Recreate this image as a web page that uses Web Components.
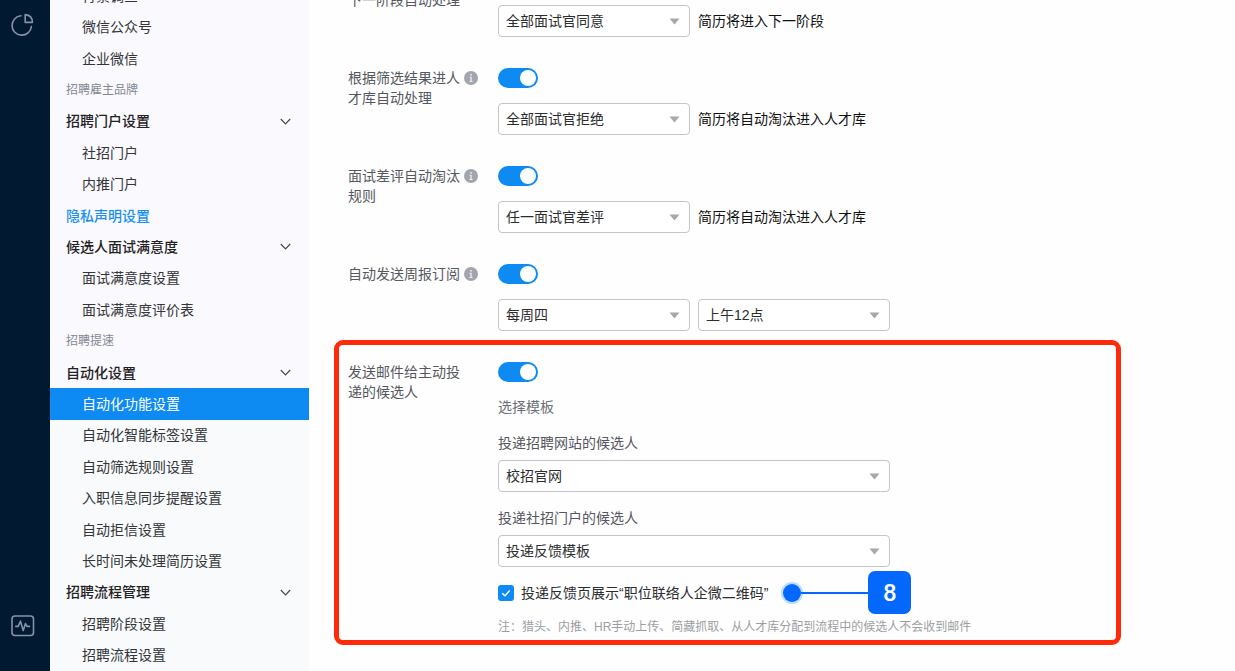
<!DOCTYPE html>
<html lang="zh-CN">
<head>
<meta charset="utf-8">
<meta name="viewport" content="width=device-width, initial-scale=1">
<title>自动化功能设置</title>
<style>
  html, body { margin: 0; }
  body {
    font-family: "Liberation Sans", "Noto Sans CJK SC", sans-serif;
    font-size: 14px;
    line-height: 20px;
    color: #2b2d31;
    background: #fefefe;
    overflow: hidden;
  }
</style>
</head>
<body>
<app-shell>
  <side-rail slot="rail"></side-rail>
  <side-nav slot="nav">
    <nav-item>背景调查</nav-item>
    <nav-item>微信公众号</nav-item>
    <nav-item>企业微信</nav-item>
    <nav-caption>招聘雇主品牌</nav-caption>
    <nav-group>招聘门户设置</nav-group>
    <nav-item>社招门户</nav-item>
    <nav-item>内推门户</nav-item>
    <nav-item top>隐私声明设置</nav-item>
    <nav-group>候选人面试满意度</nav-group>
    <nav-item>面试满意度设置</nav-item>
    <nav-item>面试满意度评价表</nav-item>
    <nav-caption>招聘提速</nav-caption>
    <nav-group>自动化设置</nav-group>
    <nav-item active>自动化功能设置</nav-item>
    <nav-item>自动化智能标签设置</nav-item>
    <nav-item>自动筛选规则设置</nav-item>
    <nav-item>入职信息同步提醒设置</nav-item>
    <nav-item>自动拒信设置</nav-item>
    <nav-item>长时间未处理简历设置</nav-item>
    <nav-group>招聘流程管理</nav-group>
    <nav-item>招聘阶段设置</nav-item>
    <nav-item>招聘流程设置</nav-item>
  </side-nav>

  <setting-row info>
    <span slot="label">根据筛选结果进入下一阶段自动处理</span>
    <control-line>
      <select-box value="全部面试官同意"></select-box>
      <span>简历将进入下一阶段</span>
    </control-line>
  </setting-row>
  <setting-row info>
    <span slot="label">根据筛选结果进人才库自动处理</span>
    <control-line>
      <select-box value="全部面试官拒绝"></select-box>
      <span>简历将自动淘汰进入人才库</span>
    </control-line>
  </setting-row>
  <setting-row info>
    <span slot="label">面试差评自动淘汰规则</span>
    <control-line>
      <select-box value="任一面试官差评"></select-box>
      <span>简历将自动淘汰进入人才库</span>
    </control-line>
  </setting-row>
  <setting-row info>
    <span slot="label">自动发送周报订阅</span>
    <control-line>
      <select-box value="每周四"></select-box>
      <select-box value="上午12点"></select-box>
    </control-line>
  </setting-row>
  <highlight-frame>
    <setting-row>
      <span slot="label">发送邮件给主动投递的候选人</span>
      <template-form></template-form>
    </setting-row>
  </highlight-frame>
</app-shell>

<script>
  const define = (name, html, setup) => {
    const template = document.createElement('template');
    template.innerHTML = html;
    customElements.define(name, class extends HTMLElement {
      constructor() {
        super();
        this.attachShadow({ mode: 'open' }).append(template.content.cloneNode(true));
      }
      connectedCallback() {
        if (setup) setup(this, this.shadowRoot);
      }
    });
  };

  define('app-shell', `
    <style>
      :host { display: flex; min-height: 100vh; }
      slot[name=rail], slot[name=nav] { display: contents; }
      main { flex: 1; min-width: 0; margin-top: -30px; padding-left: 39px; display: flow-root; color: #111; }
    </style>
    <slot name="rail"></slot>
    <slot name="nav"></slot>
    <main><slot></slot></main>`);

  define('side-rail', `
    <style>
      :host {
        flex: none; width: 50px; box-sizing: border-box; padding: 12px 10px 34px;
        display: flex; flex-direction: column; justify-content: space-between;
        background: #021a31;
      }
      button { all: unset; display: block; height: 24px; }
      svg { display: block; fill: none; stroke: #8593a8; stroke-width: 1.6; stroke-linejoin: round; stroke-linecap: round; }
    </style>
    <button aria-label="报表"><svg width="26" height="26" viewBox="0 0 26 26">
      <path d="M11 3.8A9.7 9.7 0 1 0 21.4 14.5"/>
      <path d="M15.2 2.6V10.4H22.4C22.4 5.8 19.6 3 15.2 2.6Z"/>
    </svg></button>
    <button aria-label="动态"><svg width="26" height="26" viewBox="0 0 26 26">
      <rect x="2" y="3" width="21.5" height="19.5" rx="3"/>
      <path d="M5.8 13.4H8.2L10.5 8.2L13.2 17.6L15.5 10.6L17 13.4H19.5"/>
    </svg></button>`);

  define('side-nav', `
    <style>
      :host {
        flex: none; width: 259px; display: flex; flex-direction: column;
        background: linear-gradient(#faf9fd 0, #faf9fd 388px, #f8fafb 420px);
      }
      nav { flex: 1; margin-top: -20px; display: flex; flex-direction: column; }
      ::slotted(*) { flex: 1 0 31px; }
    </style>
    <nav><slot></slot></nav>`);

  define('nav-item', `
    <style>
      :host { display: flex; color: #333539; }
      a { flex: 1; display: flex; align-items: center; padding-left: 32px; color: inherit; text-decoration: none; }
      :host([active]) { background: #0d8bf2; color: #fff; }
      :host([top]) { color: #1a91ee; font-weight: 500; }
      :host([top]) a { padding-left: 16px; }
    </style>
    <a href="#"><slot></slot></a>`);

  define('nav-caption', `
    <style>
      :host { display: flex; align-items: center; padding-left: 16px; font-size: 12px; color: #858892; }
    </style>
    <slot></slot>`);

  define('nav-group', `
    <style>
      :host { display: flex; }
      button {
        flex: 1; border: 0; margin: 0; padding: 0 18px 0 16px; background: none;
        display: flex; align-items: center; justify-content: space-between;
        font: inherit; font-weight: 500; color: #1f2125;
      }
      svg { fill: none; stroke: #44474d; stroke-width: 1.2; }
    </style>
    <button aria-expanded="true"><slot></slot>
      <svg width="11" height="7" viewBox="0 0 11 7"><path d="M0.8 1L5.5 5.8L10.2 1"/></svg>
    </button>`);

  define('setting-row', `
    <style>
      :host { display: flex; align-items: flex-start; margin-bottom: 31px; }
      .name { flex: none; width: 150px; display: flex; gap: 4px; color: #55585f; }
      label { width: 112px; }
      svg { display: none; margin-top: 3px; }
      :host([info]) svg { display: block; }
      .body { flex: 1; min-width: 0; }
      input {
        appearance: none; display: block; box-sizing: border-box; width: 40px; height: 20px;
        margin: 0 0 15px; padding: 2px; border-radius: 10px; background: #0d8bf2;
      }
      input::before { content: ""; display: block; width: 16px; height: 16px; border-radius: 8px; background: #fff; }
      input:checked::before { margin-left: auto; }
      input:not(:checked) { background: #b9bcc4; }
    </style>
    <div class="name">
      <label for="toggle"><slot name="label"></slot></label>
      <svg width="14" height="14" viewBox="0 0 14 14" aria-hidden="true">
        <circle cx="7" cy="7" r="7" fill="#a2a5ad"/>
        <path d="M6.2 2.9H7.8V4.5H6.2ZM5.6 5.8H7.7V9.9H8.6V10.9H5.4V9.9H6.4V6.8H5.6Z" fill="#eceef1"/>
      </svg>
    </div>
    <div class="body">
      <input id="toggle" type="checkbox" role="switch" checked>
      <slot></slot>
    </div>`);

  define('control-line', `
    <style>:host { display: flex; align-items: center; gap: 8px; }</style>
    <slot></slot>`);

  define('select-box', `
    <style>
      :host { display: block; width: 192px; }
      :host([wide]) { width: auto; max-width: 392px; }
      label { display: block; margin-bottom: 7px; color: #55585f; }
      label:empty { display: none; }
      .field { display: grid; align-items: center; }
      select, svg { grid-area: 1 / 1; }
      select {
        appearance: none; width: 100%; height: 32px; box-sizing: border-box; margin: 0; padding: 0 24px 0 7px;
        border: 1px solid #c3c5ca; border-radius: 4px; background: #fff; font: inherit; color: #2b2d31;
      }
      svg { justify-self: end; margin-right: 10px; pointer-events: none; }
    </style>
    <label for="choice"></label>
    <div class="field">
      <select id="choice"><option></option></select>
      <svg width="11" height="7" viewBox="0 0 11 7"><path d="M0.5 0.5H10.5L5.5 6.5Z" fill="#a6a8ad"/></svg>
    </div>`, (host, root) => {
      root.querySelector('option').textContent = host.getAttribute('value');
      const caption = host.getAttribute('caption');
      if (caption) root.querySelector('label').textContent = caption;
      else root.querySelector('select').setAttribute('aria-label', host.getAttribute('value'));
    });

  define('highlight-frame', `
    <style>
      :host {
        display: flow-root; margin: -22px 114px 0 -14px; padding: 17px 9px 3px;
        border: 5px solid #ff2a0a; border-radius: 9px;
      }
      ::slotted(*) { margin-bottom: 0; }
    </style>
    <slot></slot>`);

  define('template-form', `
    <style>
      :host { display: block; }
      p { margin: 0 0 16px; color: #6d7077; }
      select-box { margin-bottom: 16px; }
      .option { position: relative; display: inline-flex; align-items: center; gap: 7px; color: #2b2d31; vertical-align: top; }
      .option label { white-space: nowrap; }
      .tick { flex: none; display: grid; }
      input, .tick svg { grid-area: 1 / 1; }
      input { appearance: none; width: 16px; height: 16px; margin: 0; border-radius: 3px; background: #0d8bf2; }
      .tick svg { pointer-events: none; }
      input:not(:checked) + svg { display: none; }
      step-callout { position: absolute; left: 100%; top: -12px; margin-left: 13px; }
      small { display: block; margin-top: 14px; font-size: 12px; color: #9c9ea4; }
    </style>
    <p>选择模板</p>
    <select-box wide caption="投递招聘网站的候选人" value="校招官网"></select-box>
    <select-box wide caption="投递社招门户的候选人" value="投递反馈模板"></select-box>
    <div class="option">
      <span class="tick">
        <input id="show" type="checkbox" checked>
        <svg width="16" height="16" viewBox="0 0 16 16"><path d="M4.2 8.2L7 10.8L11.8 5.4" fill="none" stroke="#fff" stroke-width="1.4"/></svg>
      </span>
      <label for="show">投递反馈页展示“职位联络人企微二维码”</label>
      <step-callout>8</step-callout>
    </div>
    <small>注：猎头、内推、HR手动上传、简藏抓取、从人才库分配到流程中的候选人不会收到邮件</small>`);

  define('step-callout', `
    <style>
      :host { display: flex; align-items: center; }
      .dot { width: 18px; height: 18px; margin: 0 0 0 2px; border-radius: 50%; background: #0568fd; box-shadow: 0 0 0 2px #bcdcfb; }
      .line { width: 67px; height: 2px; background: #0568fd; z-index: 1; }
      .badge {
        width: 43px; height: 43px; border-radius: 7px; background: #0568fd; color: #fff;
        font: 500 24px/44px Roboto, "Liberation Sans", sans-serif; text-align: center;
      }
    </style>
    <span class="dot"></span><span class="line"></span><span class="badge"><slot></slot></span>`);
</script>
</body>
</html>
